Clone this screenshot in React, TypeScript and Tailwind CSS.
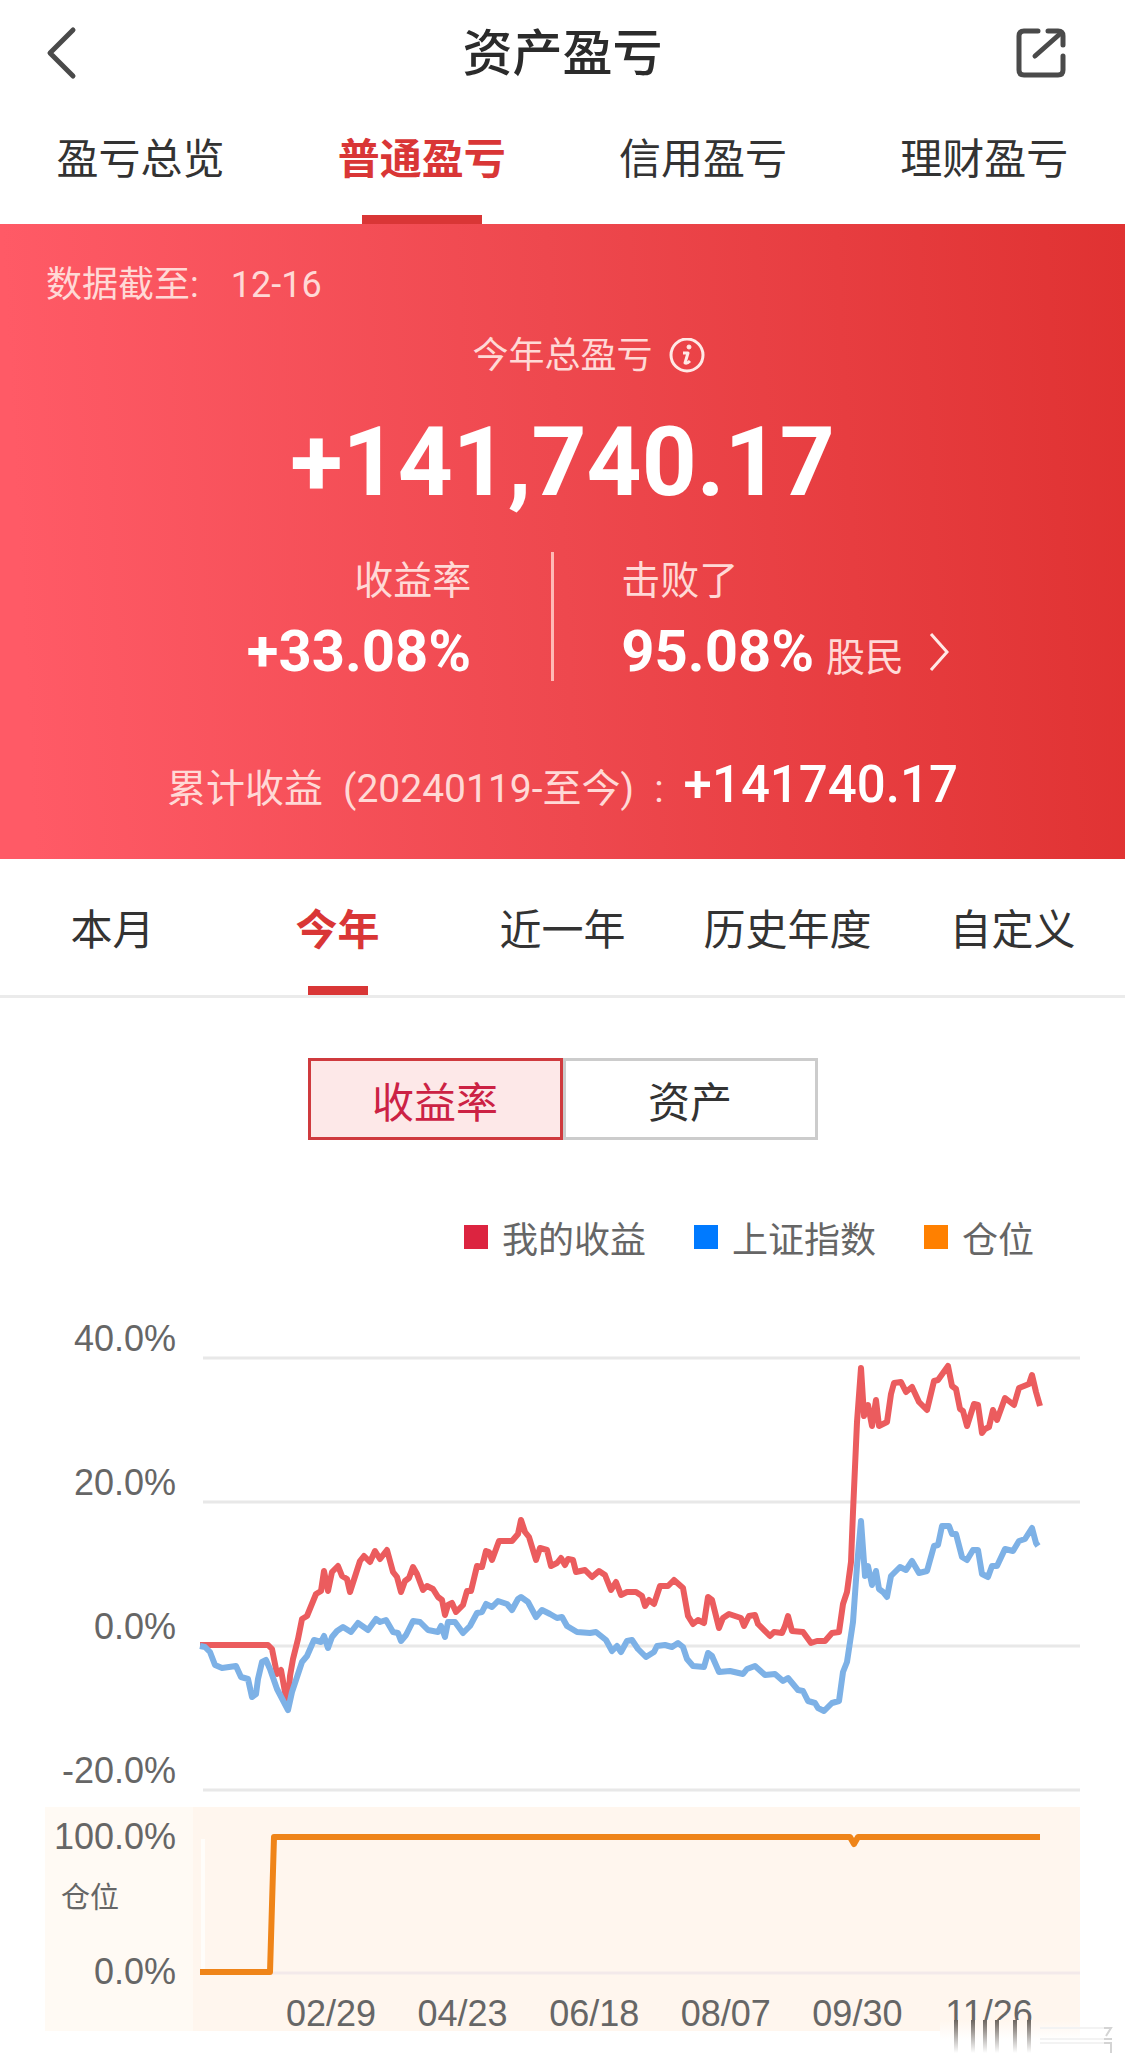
import { useState } from "react";

const accountTabs = ["盈亏总览", "普通盈亏", "信用盈亏", "理财盈亏"];
const periodTabs = ["本月", "今年", "近一年", "历史年度", "自定义"];

const legend = [
  { label: "我的收益", color: "bg-[#dc2440]" },
  { label: "上证指数", color: "bg-[#007aff]" },
  { label: "仓位", color: "bg-[#ff8000]" },
];

const yLabels = [
  { text: "40.0%", y: 1359 },
  { text: "20.0%", y: 1503 },
  { text: "0.0%", y: 1647 },
  { text: "-20.0%", y: 1791 },
];

const dates = ["02/29", "04/23", "06/18", "08/07", "09/30", "11/26"];

const mine =
  "200,1646 268,1646 272,1650 277,1675 281,1671 285,1693 288,1706 290,1677 293,1660 298,1640 302,1620 307,1617 316,1595 321,1592 324,1572 328,1592 332,1573 338,1567 342,1577 347,1580 350,1593 360,1562 364,1557 370,1563 375,1552 380,1560 387,1551 393,1573 397,1578 401,1593 405,1582 409,1579 413,1568 417,1575 423,1591 427,1587 433,1590 438,1598 442,1601 445,1616 448,1606 452,1604 456,1613 463,1606 467,1592 471,1592 477,1567 482,1568 486,1552 489,1553 492,1561 499,1542 512,1542 518,1535 521,1521 525,1533 529,1538 536,1561 540,1549 547,1551 551,1567 557,1564 561,1559 565,1566 568,1560 573,1561 576,1573 585,1571 592,1578 599,1572 605,1576 611,1591 616,1583 621,1596 627,1593 636,1593 642,1597 645,1607 649,1601 654,1605 660,1587 668,1587 674,1581 683,1589 688,1617 693,1625 698,1621 704,1624 708,1598 712,1601 719,1629 723,1619 729,1615 741,1619 744,1627 749,1617 755,1616 758,1625 770,1637 774,1633 782,1634 785,1627 788,1617 792,1632 803,1633 811,1644 817,1642 825,1642 832,1634 839,1633 843,1605 847,1593 851,1563 853,1513 857,1423 861,1369 864,1417 868,1406 872,1427 876,1401 879,1427 887,1423 891,1395 894,1384 901,1383 906,1393 912,1388 919,1403 927,1411 934,1382 938,1381 943,1374 948,1367 952,1387 956,1390 960,1410 963,1412 967,1427 974,1405 978,1406 982,1434 985,1430 989,1428 993,1411 997,1421 1005,1399 1014,1406 1019,1389 1029,1385 1032,1376 1036,1393 1040,1407";

const shanghai =
  "200,1647 205,1648 210,1653 215,1666 222,1669 236,1667 241,1678 248,1680 252,1698 256,1695 258,1680 262,1663 266,1661 270,1670 277,1690 288,1711 292,1693 302,1663 307,1657 314,1641 321,1643 324,1637 328,1649 332,1638 337,1632 343,1628 351,1633 358,1624 368,1631 376,1620 380,1623 386,1621 393,1633 398,1634 401,1642 406,1636 413,1622 420,1623 428,1631 438,1633 441,1627 445,1638 448,1623 455,1623 463,1634 470,1627 477,1614 482,1613 486,1605 492,1608 498,1602 507,1605 512,1611 518,1600 521,1598 528,1603 536,1618 542,1611 550,1615 557,1619 562,1618 567,1627 577,1633 590,1634 596,1633 606,1641 612,1652 617,1647 621,1653 627,1642 632,1641 638,1650 646,1658 654,1653 657,1647 665,1646 672,1648 678,1644 683,1648 687,1660 693,1667 704,1668 708,1654 712,1657 719,1673 730,1672 743,1675 747,1670 755,1667 765,1676 775,1675 783,1682 788,1679 798,1691 803,1692 808,1702 815,1704 818,1709 824,1712 832,1704 839,1702 843,1673 847,1663 853,1623 857,1567 861,1522 865,1577 868,1567 872,1586 876,1572 879,1590 883,1593 887,1598 891,1577 900,1568 906,1571 912,1562 919,1574 927,1572 934,1547 938,1546 942,1527 949,1527 952,1535 956,1535 962,1558 967,1561 973,1551 978,1551 982,1575 988,1578 992,1567 997,1567 1005,1550 1013,1552 1019,1542 1025,1540 1032,1529 1036,1544 1038,1547";

const position = "200,1973 270,1973 274,1838 850,1838 854,1845 858,1838 1040,1838";

function Header() {
  return (
    <header className="grid h-[106px] grid-cols-[1fr_auto_1fr] items-center px-11">
      <button aria-label="返回" className="justify-self-start text-[#4a4a4a]">
        <svg width="36" height="56" viewBox="0 0 36 56" fill="none" stroke="currentColor" strokeWidth="5" strokeLinecap="round" strokeLinejoin="round">
          <path d="M29 5 L6 28 L29 51" />
        </svg>
      </button>
      <h1 className="pb-2 text-[50px] leading-[60px] font-medium text-[#2b2b2b]">资产盈亏</h1>
      <button aria-label="分享" className="mr-3 justify-self-end text-[#4a4a4a]">
        <svg width="56" height="56" viewBox="0 0 56 56" fill="none" stroke="currentColor" strokeWidth="5" strokeLinecap="round" strokeLinejoin="round">
          <path d="M25 6 H11 Q6 6 6 11 V45 Q6 50 11 50 H45 Q50 50 50 45 V31" />
          <path d="M35 6 H45 Q50 6 50 11 V20" />
          <path d="M22 31 L48 8" />
        </svg>
      </button>
    </header>
  );
}

function AccountTabs() {
  const [active, setActive] = useState("普通盈亏");
  return (
    <nav className="grid h-[118px] grid-cols-4">
      {accountTabs.map((tab) => (
        <button key={tab} onClick={() => setActive(tab)} className="flex flex-col items-center">
          <span className={tab === active ? "flex-1 content-center pb-[10px] text-[42px] font-bold text-[#d93636]" : "flex-1 content-center pb-[10px] text-[42px] text-[#333]"}>
            {tab}
          </span>
          <span className={tab === active ? "h-[9px] w-[120px] bg-[#d93636]" : "h-[9px]"} />
        </button>
      ))}
    </nav>
  );
}

function Summary() {
  return (
    <section className="bg-[linear-gradient(87deg,#ff5a66_3%,#ee484e_50%,#e03232_100%)] pt-[37px] pb-11 font-['Roboto','Noto_Sans_CJK_SC',sans-serif] text-[#ffd9d6]">
      <p className="flex gap-8 pl-[46px] text-[36px] leading-[48px]">
        <span>数据截至:</span>
        <span>12-16</span>
      </p>
      <div className="mt-[23px] flex items-center justify-center gap-4 pl-[52px] text-[36px] leading-[48px]">
        <span>今年总盈亏</span>
        <button aria-label="说明">
          <svg width="36" height="36" viewBox="0 0 36 36" fill="none" stroke="#ffe9e6">
            <circle cx="18" cy="17" r="16" strokeWidth="3" />
            <circle cx="20" cy="9" r="2" fill="#ffe9e6" strokeWidth="1" />
            <path d="M14 15 H19 L16 25 Q18 26 21 23" strokeWidth="3" strokeLinejoin="round" />
          </svg>
        </button>
      </div>
      <p className="mt-8 text-center text-[96px] leading-[100px] font-bold text-white">+141,740.17</p>
      <div className="mt-10 grid h-[129px] grid-cols-[49fr_51fr]">
        <div className="flex flex-col items-end gap-4 pt-[5px] pr-20">
          <span className="text-[39px] leading-[48px]">收益率</span>
          <span className="text-[58px] leading-[60px] font-bold text-white">+33.08%</span>
        </div>
        <div className="flex flex-col items-start gap-4 border-l-3 border-[#ffb9b5] pt-[5px] pl-[67px]">
          <span className="text-[39px] leading-[48px]">击败了</span>
          <a href="#rank" className="flex h-[60px] items-baseline text-[39px] leading-[60px]">
            <span className="mr-3 text-[58px] font-bold text-white">95.08%</span>
            股民
            <svg className="ml-6 self-end" width="24" height="48" viewBox="0 0 24 48" fill="none" stroke="#ffe9e6" strokeWidth="3">
              <path d="M3 1 L19 19 L3 37" />
            </svg>
          </a>
        </div>
      </div>
      <p className="mt-[74px] flex h-[60px] items-baseline justify-center text-[39px] leading-[60px]">
        <span className="mr-5">累计收益</span>
        <span className="mr-5">(20240119-至今)</span>
        <span className="mr-5">:</span>
        <span className="text-[51px] font-medium text-white">+141740.17</span>
      </p>
    </section>
  );
}

function PeriodTabs() {
  const [active, setActive] = useState("今年");
  return (
    <nav className="grid h-[139px] grid-cols-5 border-b-3 border-[#ebebeb]">
      {periodTabs.map((tab) => (
        <button key={tab} onClick={() => setActive(tab)} className="flex flex-col items-center">
          <span className={tab === active ? "flex-1 content-center pt-2 text-[42px] font-bold text-[#d93636]" : "flex-1 content-center pt-2 text-[42px] text-[#333]"}>
            {tab}
          </span>
          <span className={tab === active ? "h-[9px] w-[60px] bg-[#d93636]" : "h-[9px]"} />
        </button>
      ))}
    </nav>
  );
}

function Chart() {
  return (
    <svg viewBox="0 1290 1125 776" className="block w-full font-['Liberation_Sans','Noto_Sans_CJK_SC',sans-serif]" fill="#666" fontSize="36" role="img" aria-label="收益率走势">
      <defs>
        <linearGradient id="streak" x1="0" y1="0" x2="0" y2="1">
          <stop offset="0" stopColor="#6b6560" />
          <stop offset="1" stopColor="#6b6560" stopOpacity="0" />
        </linearGradient>
        <linearGradient id="cover" x1="0" y1="0" x2="0" y2="1">
          <stop offset="0" stopColor="#fff6ee" />
          <stop offset="0.6" stopColor="#fff" />
        </linearGradient>
      </defs>

      {yLabels.map((l) => (
        <g key={l.text}>
          <path d={`M203 ${l.y} H1080`} stroke="#e8e8e8" strokeWidth="3" />
          <text x="176" y={l.y - 7} textAnchor="end">{l.text}</text>
        </g>
      ))}

      <g fill="none" strokeWidth="6" strokeLinejoin="round">
        <polyline points={mine} stroke="#eb5c5e" />
        <polyline points={shanghai} stroke="#7db1e6" />
      </g>

      <rect x="45" y="1808" width="1035" height="224" fill="#fff6ee" />
      <rect x="45" y="1808" width="148" height="224" fill="#fffaf4" />
      <path d="M203 1974 H1080" stroke="#f3e9ea" strokeWidth="3" />
      <path d="M203 1840 V1970" stroke="#fffdfa" strokeWidth="4" />
      <text x="176" y="1850" textAnchor="end">100.0%</text>
      <text x="61" y="1909" fontSize="29">仓位</text>
      <text x="176" y="1985" textAnchor="end">0.0%</text>
      <polyline points={position} fill="none" stroke="#ef8418" strokeWidth="6" strokeLinejoin="round" />
      {dates.map((d, i) => (
        <text key={d} x={331 + i * 131.6} y="2027" textAnchor="middle">{d}</text>
      ))}

      <rect x="940" y="2021" width="140" height="34" fill="url(#cover)" />
      {[956, 973, 985, 997, 1015, 1029].map((x) => (
        <rect key={x} x={x - 2} y="2021" width="4" height="33" fill="url(#streak)" />
      ))}
      <g fill="none" stroke="#d4d4d4" strokeWidth="2">
        <path d="M1040 2029 H1105 M1040 2040 H1105 M1040 2044 H1105" stroke="#f3f3f3" />
        <path d="M1104 2029 H1111 L1106 2037 M1104 2040 H1112 M1104 2044 H1111 V2054" />
      </g>
    </svg>
  );
}

export default function App() {
  const [mode, setMode] = useState("收益率");
  return (
    <main className="min-h-screen bg-white font-['Noto_Sans_CJK_SC',sans-serif]">
      <Header />
      <AccountTabs />
      <Summary />
      <PeriodTabs />
      <div className="mx-auto mt-15 grid h-[82px] w-[510px] grid-cols-2 text-[42px]">
        {["收益率", "资产"].map((m) => (
          <button
            key={m}
            onClick={() => setMode(m)}
            className={m === mode ? "border-3 border-[#cf3a3e] bg-[#fde8e8] text-[#cc2244]" : "border-3 border-[#ccc] text-[#333]"}
          >
            {m}
          </button>
        ))}
      </div>
      <ul className="mt-[73px] flex h-12 items-center justify-end gap-12 pr-[91px] text-[36px] leading-[48px] text-[#666]">
        {legend.map((item) => (
          <li key={item.label} className="flex items-center gap-[14px]">
            <span className={`size-6 ${item.color}`} />
            {item.label}
          </li>
        ))}
      </ul>
      <div className="mt-7">
        <Chart />
      </div>
    </main>
  );
}
